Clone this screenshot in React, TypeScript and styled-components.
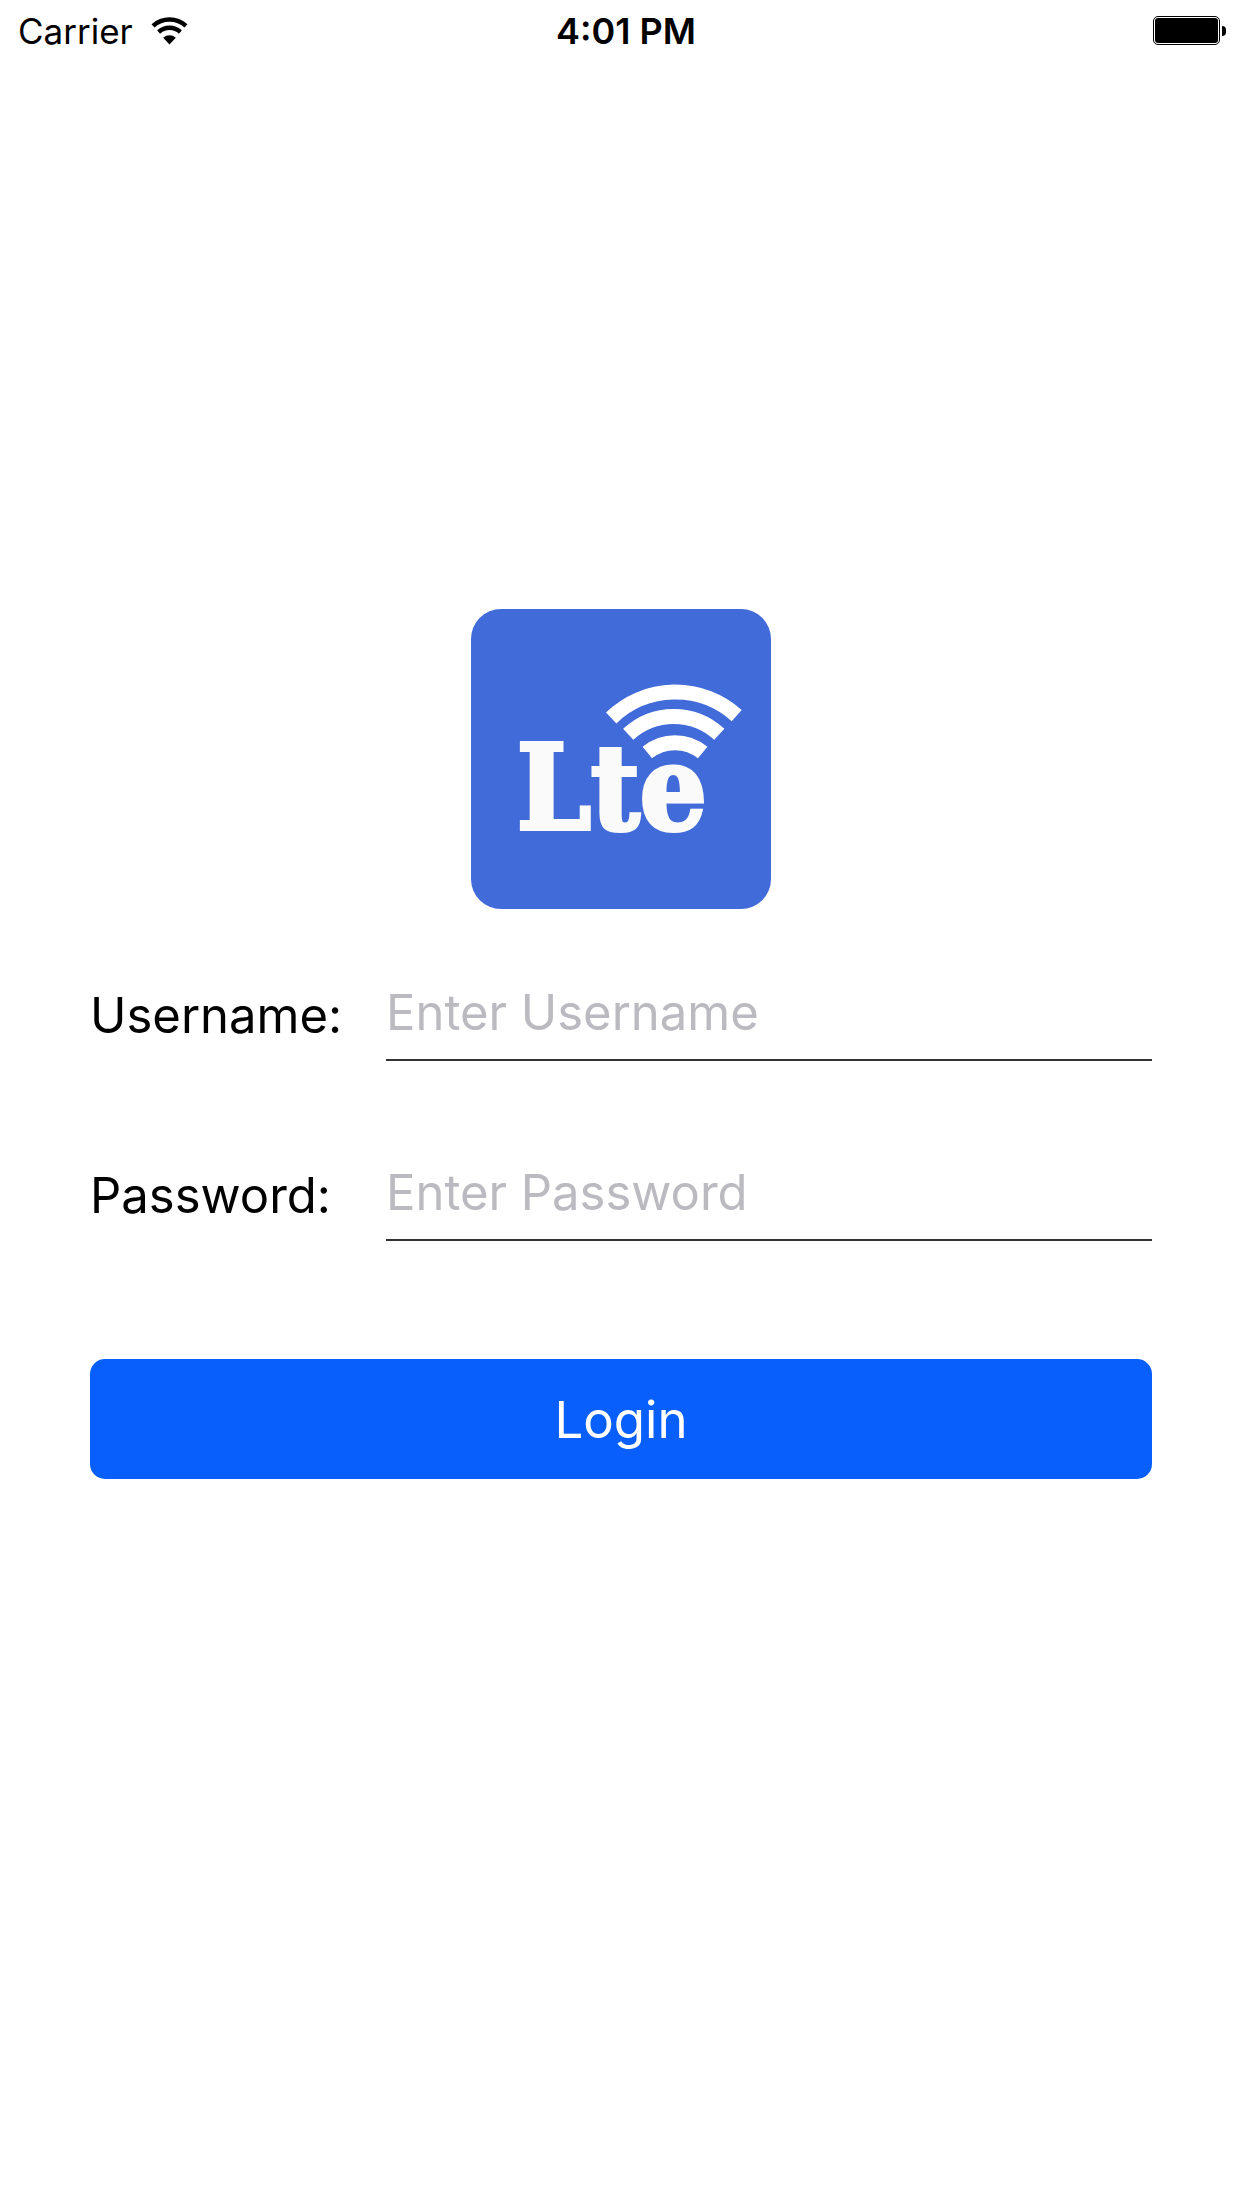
import React from "react";
import styled, { createGlobalStyle } from "styled-components";

const GlobalStyle = createGlobalStyle`
  * {
    box-sizing: border-box;
  }
  body {
    margin: 0;
    background: #ffffff;
    color: #000000;
    font-family: Inter, "Noto Sans", sans-serif;
  }
`;

const Screen = styled.div`
  display: flex;
  flex-direction: column;
  min-height: 100vh;
`;

const StatusBar = styled.header`
  display: grid;
  grid-template-columns: 1fr auto 1fr;
  align-items: center;
  height: 60px;
  padding: 1px 16px 0 18px;
  font-size: 35px;
  line-height: 44px;
`;

const Carrier = styled.div`
  display: flex;
  align-items: center;
  gap: 18px;
`;

const Clock = styled.time`
  padding-left: 8px;
  font-size: 36px;
  font-weight: 600;
`;

const Battery = styled.div`
  display: flex;
  align-items: center;
  justify-self: end;
  gap: 2px;
`;

const BatteryCell = styled.div`
  width: 67px;
  height: 29px;
  padding: 1px;
  border: 1px solid #000000;
  border-radius: 5px;

  &::before {
    content: "";
    display: block;
    height: 100%;
    border-radius: 3px;
    background: #000000;
  }
`;

const BatteryTip = styled.div`
  width: 4px;
  height: 10px;
  border-radius: 0 4px 4px 0;
  background: #000000;
`;

const Main = styled.main`
  flex: 1;
  display: flex;
  flex-direction: column;
  align-items: center;
  justify-content: center;
  gap: 32px;
  padding: 0 90px 180px;
`;

const Logo = styled.svg`
  display: block;
  width: 300px;
  height: 300px;
  border-radius: 30px;
  background: #416bd9;
`;

const LogoText = styled.text`
  font-family: "DejaVu Serif Condensed", "DejaVu Serif", serif;
  font-size: 117px;
  font-weight: 700;
  fill: #fafafa;
  stroke: #fafafa;
  stroke-width: 4px;
  stroke-linejoin: miter;
`;

const Form = styled.form`
  display: flex;
  flex-direction: column;
  gap: 60px;
  width: 100%;
`;

const Field = styled.div`
  display: grid;
  grid-template-columns: 296px 1fr;
  align-items: stretch;
  height: 120px;
`;

const Label = styled.label`
  padding-top: 45px;
  font-size: 49px;
  line-height: 60px;
`;

const Input = styled.input`
  width: 100%;
  min-width: 0;
  padding: 24px 0 0;
  border: 0;
  border-bottom: 2px solid #333333;
  border-radius: 0;
  outline: none;
  background: transparent;
  color: #000000;
  font-family: inherit;
  font-size: 49px;

  &::placeholder {
    color: #bbbac1;
    opacity: 1;
  }
`;

const LoginButton = styled.button`
  height: 120px;
  margin-top: 58px;
  padding: 0;
  border: 0;
  border-radius: 15px;
  background: #085ffb;
  color: #ffffff;
  font-family: inherit;
  font-size: 51px;
  cursor: pointer;
`;

function WifiIcon() {
  return (
    <svg width="37" height="28" viewBox="0 0 37 28" fill="none" aria-hidden="true">
      <g stroke="#000" strokeWidth="4.4">
        <path d="M2 8.9A24.5 24.5 0 0 1 35 8.9" />
        <path d="M7.6 15A16.2 16.2 0 0 1 29.4 15" />
      </g>
      <path d="M18.5 27.4L12.2 20.8A9.3 9.3 0 0 1 24.8 20.8Z" fill="#000" />
    </svg>
  );
}

function LteLogo() {
  return (
    <Logo viewBox="0 0 300 300" role="img" aria-label="Lte">
      <g fill="none" stroke="#fff" strokeWidth="15">
        <path d="M140.2 109A92 92 0 0 1 265.7 106.7" />
        <path d="M157.2 125.3A67 67 0 0 1 248.3 125.3" />
        <path d="M176.3 143.5A44 44 0 0 1 231.7 143.5" />
      </g>
      <LogoText x="46" y="220">Lte</LogoText>
    </Logo>
  );
}

export default function App() {
  return (
    <Screen>
      <GlobalStyle />
      <StatusBar>
        <Carrier>
          Carrier
          <WifiIcon />
        </Carrier>
        <Clock>4:01 PM</Clock>
        <Battery role="img" aria-label="Battery full">
          <BatteryCell />
          <BatteryTip />
        </Battery>
      </StatusBar>
      <Main>
        <LteLogo />
        <Form onSubmit={(event) => event.preventDefault()}>
          <Field>
            <Label htmlFor="username">Username:</Label>
            <Input id="username" type="text" placeholder="Enter Username" autoComplete="username" />
          </Field>
          <Field>
            <Label htmlFor="password">Password:</Label>
            <Input id="password" type="password" placeholder="Enter Password" autoComplete="current-password" />
          </Field>
          <LoginButton type="submit">Login</LoginButton>
        </Form>
      </Main>
    </Screen>
  );
}
